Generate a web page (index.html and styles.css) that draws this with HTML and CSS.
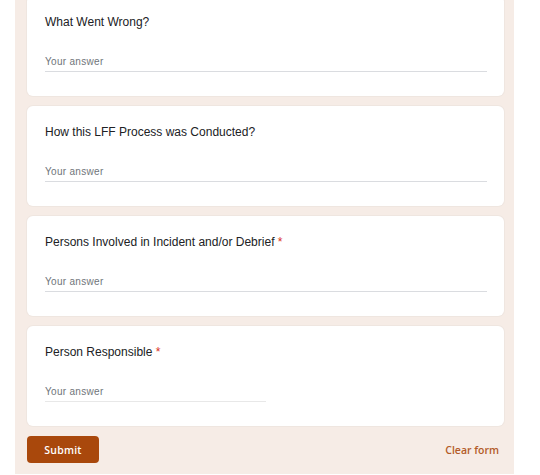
FILE: index.html
```html
<!DOCTYPE html>
<html lang="en">
<head>
<meta charset="utf-8">
<title>Form</title>
<link rel="stylesheet" href="styles.css">
</head>
<body>
<div class="column">
  <div class="cards">
    <div class="card">
      <div class="question">What Went Wrong?</div>
      <div class="answer">Your answer</div>
    </div>
    <div class="card">
      <div class="question">How this LFF Process was Conducted?</div>
      <div class="answer">Your answer</div>
    </div>
    <div class="card">
      <div class="question">Persons Involved in Incident and/or Debrief <span class="req">*</span></div>
      <div class="answer">Your answer</div>
    </div>
    <div class="card">
      <div class="question">Person Responsible <span class="req">*</span></div>
      <div class="answer short">Your answer</div>
    </div>
  </div>
  <div class="footer">
    <button class="submit">Submit</button>
    <span class="clear">Clear form</span>
  </div>
</div>
</body>
</html>
```
FILE: styles.css
```css
html, body {
  margin: 0;
  padding: 0;
  background: #ffffff;
}
body {
  font-family: "Liberation Sans", Arial, sans-serif;
  color: #202124;
}
.column {
  margin-left: 15px;
  width: 499px;
  height: 474px;
  background: #f6ece6;
  padding: 0 10px 0 12px;
  box-sizing: border-box;
  display: flex;
  flex-direction: column;
  overflow: hidden;
}
.cards {
  margin-top: -4px;
  display: flex;
  flex-direction: column;
  gap: 10px;
}
.card {
  background: #ffffff;
  border-radius: 6px;
  box-shadow: 0 0 0 1px #efe6e0;
  padding: 18px 17px 23px 18px;
  height: 100px;
  box-sizing: border-box;
}
.question {
  font-size: 12px;
  line-height: 16px;
  color: #202124;
}
.req {
  color: #d93025;
}
.answer {
  margin-top: 22px;
  height: 20px;
  box-sizing: border-box;
  border-bottom: 1px solid #dadce0;
  font-size: 10px;
  line-height: 19px;
  color: #70757a;
  letter-spacing: 0.3px;
}
.answer.short {
  width: 221px;
  border-bottom: 1px solid #e8e8e8;
}
.footer {
  margin-top: 10px;
  display: flex;
  align-items: center;
  justify-content: space-between;
}
.submit {
  width: 72px;
  height: 27px;
  background: #a9480c;
  border: none;
  border-radius: 4px;
  color: #ffffff;
  font-family: "Open Sans", Roboto, sans-serif;
  font-size: 10.5px;
  font-weight: 600;
  letter-spacing: 0.2px;
  padding: 0;
}
.clear {
  margin-right: 5px;
  color: #b35b28;
  font-family: "Open Sans", Roboto, sans-serif;
  font-size: 10.5px;
  font-weight: 600;
}
```
